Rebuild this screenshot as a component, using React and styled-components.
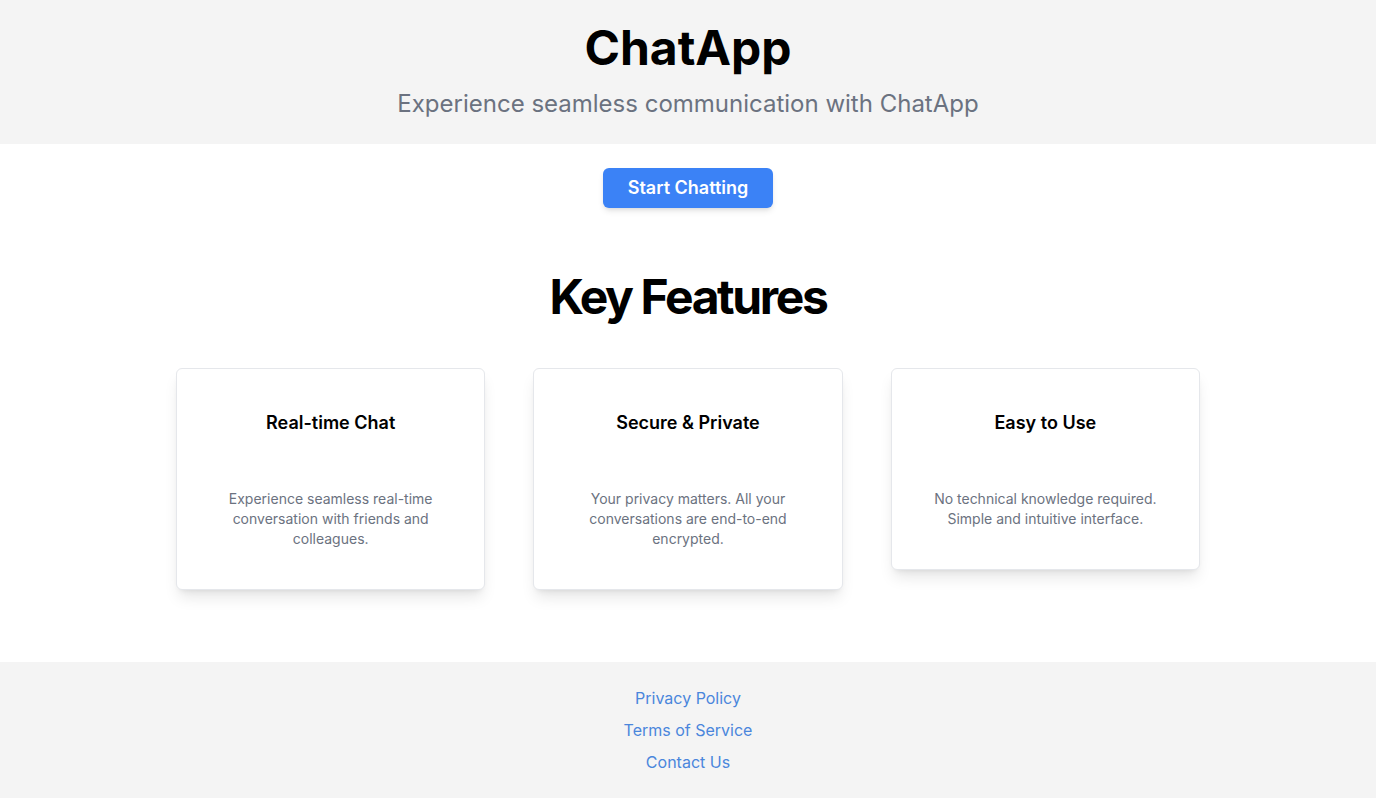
import styled, { createGlobalStyle } from "styled-components";

const Global = createGlobalStyle`
    body {
        margin: 0;
        font-family: Inter, "Noto Sans", sans-serif;
        background: #ffffff;
        color: #000000;
    }
`

const Header = styled.header`
    background: #f4f4f4;
    text-align: center;
    padding: 20px 0 24px;
`

const Title = styled.h1`
    margin: 0;
    font-size: 48px;
    line-height: 56px;
    font-weight: 700;
`

const Subtitle = styled.p`
    margin: 12px 0 0;
    font-size: 24px;
    line-height: 32px;
    color: #6b7280;
`

const Main = styled.main`
    display: flex;
    flex-direction: column;
    align-items: center;
    padding: 24px 0 72px;
`

const Button = styled.button`
    font-family: inherit;
    font-size: 18px;
    line-height: 24px;
    font-weight: 600;
    color: #ffffff;
    background: #3b82f6;
    border: none;
    border-radius: 6px;
    padding: 8px 25px;
    box-shadow: 0 4px 6px -1px rgba(0,0,0,0.1), 0 2px 4px -2px rgba(0,0,0,0.1);
    cursor: pointer;
`

const SectionTitle = styled.h2`
    margin: 61px 0 0;
    font-size: 48px;
    line-height: 56px;
    font-weight: 700;
    letter-spacing: -0.05em;
`

const Grid = styled.div`
    width: 1024px;
    margin-top: 43px;
    display: grid;
    grid-template-columns: repeat(3, 1fr);
    gap: 48px;
    align-items: start;
`

const Card = styled.div`
    background: #ffffff;
    border: 1px solid #e5e7eb;
    border-radius: 6px;
    padding: 40px 24px 40px;
    text-align: center;
    box-shadow: 0 10px 15px -3px rgba(0,0,0,0.1), 0 4px 6px -4px rgba(0,0,0,0.1);
`

const CardTitle = styled.h3`
    margin: 0;
    font-size: 18px;
    line-height: 28px;
    font-weight: 600;
`

const CardText = styled.p`
    margin: 52px 0 0;
    font-size: 14px;
    line-height: 20px;
    color: #6b7280;
`

const Footer = styled.footer`
    background: #f4f4f4;
    padding: 24px 0;
    display: flex;
    flex-direction: column;
    align-items: center;
    gap: 8px;
`

const FooterLink = styled.a`
    font-size: 16px;
    line-height: 24px;
    color: #4a86dc;
    text-decoration: none;
`

const features = [
    { title: "Real-time Chat", text: "Experience seamless real-time conversation with friends and colleagues." },
    { title: "Secure & Private", text: "Your privacy matters. All your conversations are end-to-end encrypted." },
    { title: "Easy to Use", text: "No technical knowledge required. Simple and intuitive interface." },
]

export default function App(){
    return (
        <>
            <Global />
            <Header>
                <Title>ChatApp</Title>
                <Subtitle>Experience seamless communication with ChatApp</Subtitle>
            </Header>
            <Main>
                <Button>Start Chatting</Button>
                <SectionTitle>Key Features</SectionTitle>
                <Grid>
                    {features.map((item, index) => (
                        <Card key={index}>
                            <CardTitle>{item.title}</CardTitle>
                            <CardText>{item.text}</CardText>
                        </Card>
                    ))}
                </Grid>
            </Main>
            <Footer>
                <FooterLink href="#">Privacy Policy</FooterLink>
                <FooterLink href="#">Terms of Service</FooterLink>
                <FooterLink href="#">Contact Us</FooterLink>
            </Footer>
        </>
    )
}
